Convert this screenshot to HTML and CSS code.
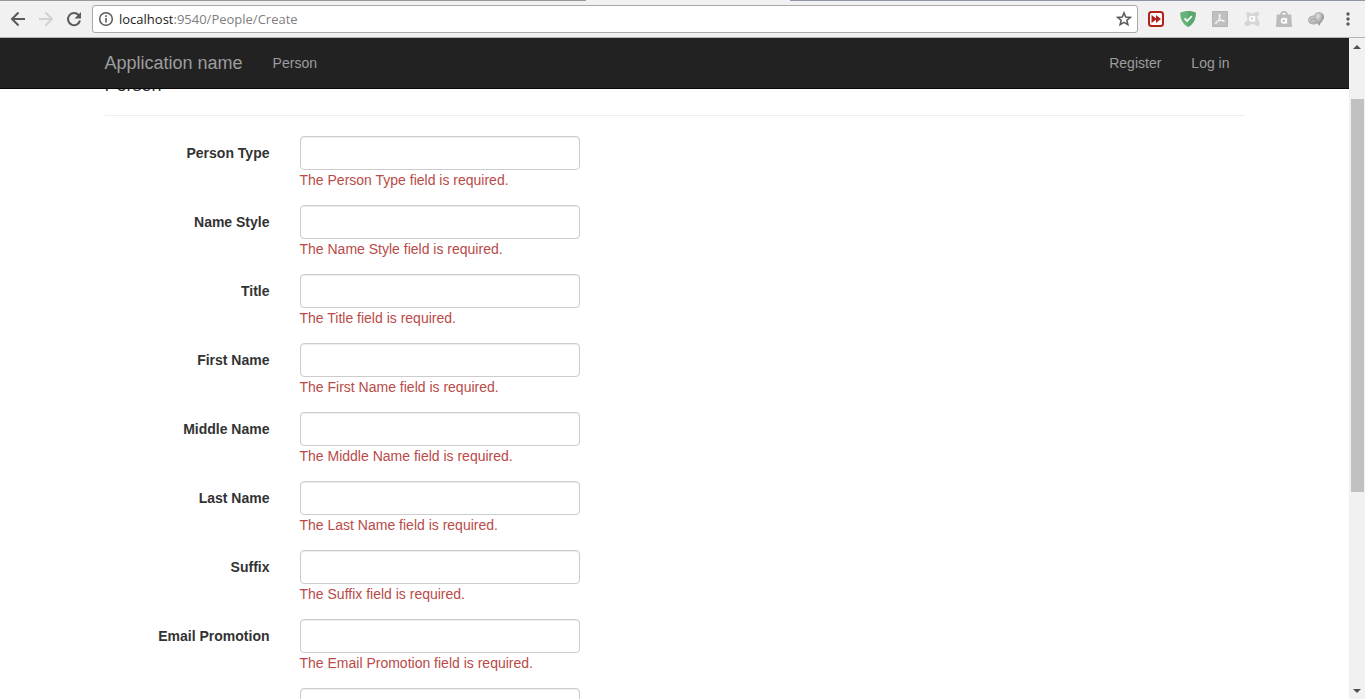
FILE: index.html
```html
<!DOCTYPE html>
<html lang="en">
<head>
  <meta charset="UTF-8">
  <meta name="viewport" content="width=device-width, initial-scale=1.0">
  <title>Create - My ASP.NET Application</title>
  <link rel="stylesheet" href="styles.css">
</head>
<body>

  <!-- browser toolbar -->
  <div class="toolbar">
    <button type="button" class="tool" aria-label="Back">
      <svg width="16" height="16" viewBox="0 0 16 16" fill="none" stroke="#5a5a5a" stroke-width="2"><path d="M15 8H2.5M8.5 1.5L2 8l6.5 6.5"/></svg>
    </button>
    <button type="button" class="tool" aria-label="Forward">
      <svg width="16" height="16" viewBox="0 0 16 16" fill="none" stroke="#d2d2d2" stroke-width="2"><path d="M1 8h12.5M7.5 1.5L14 8l-6.5 6.5"/></svg>
    </button>
    <button type="button" class="tool" aria-label="Reload">
      <svg width="16" height="16" viewBox="0 0 16 16"><path d="M12.6 4A6.1 6.1 0 1 0 14 9.6" fill="none" stroke="#5a5a5a" stroke-width="2"/><path d="M15 1v6.5H8.5z" fill="#5a5a5a"/></svg>
    </button>

    <div class="address-bar">
      <svg width="16" height="16" viewBox="0 0 16 16"><circle cx="8" cy="8" r="6.3" fill="none" stroke="#5a5a5a" stroke-width="1.5"/><path d="M7.2 7h1.6v4.5H7.2zM7.2 4.3h1.6v1.6H7.2z" fill="#5a5a5a"/></svg>
      <label class="host" for="address">localhost</label>
      <input type="text" class="address" id="address" value=":9540/People/Create">
      <button type="button" class="star" aria-label="Bookmark this page">
        <svg width="16" height="16" viewBox="0 0 16 16" fill="none" stroke="#5a5a5a" stroke-width="1.5"><path d="M8 1.9l1.7 4.2 4.6.3-3.5 2.9 1.1 4.4L8 11.3l-3.9 2.4 1.1-4.4L1.7 6.4l4.6-.3z"/></svg>
      </button>
    </div>

    <div class="extensions">
      <button type="button" class="tool" aria-label="Fast forward">
        <svg width="16" height="16" viewBox="0 0 16 16"><rect x="1" y="1" width="14" height="14" rx="2.5" fill="#fff" stroke="#b5201b" stroke-width="2"/><path d="M3.5 4L8 7.3V4l5 4-5 4V8.7L3.5 12z" fill="#b5201b"/></svg>
      </button>
      <button type="button" class="tool" aria-label="Ad blocker">
        <svg width="16" height="16" viewBox="0 0 16 16"><path d="M8 0c2.5 0 5 .6 7.7 1.5C15.8 8 14 12.5 8 16 2 12.5.2 8 .3 1.5 3 .6 5.5 0 8 0z" fill="#67b279"/><path d="M8 0c2.5 0 5 .6 7.7 1.5C15.8 8 14 12.5 8 16z" fill="#5aa86d"/><path d="M4.5 7.3l2.7 2.8 4.6-5" fill="none" stroke="#fff" stroke-width="1.7"/></svg>
      </button>
      <button type="button" class="tool" aria-label="PDF">
        <svg width="16" height="16" viewBox="0 0 16 16"><path d="M.5.5h15v15H.5z" fill="#c0c0c0" stroke="#b4b4b4"/><path d="M7.8 3c.7 1.2-.1 3.800-1.300 6.200-1 2-2.300 3.600-3 3.300-.6-.5 1.200-2.200 3.600-2.800 2.200-.6 5.400-.6 5.400.3-.1.900-2.700.1-4.100-1.700C7.300 6.900 6.900 3.500 7.800 3z" fill="none" stroke="#fff"/></svg>
      </button>
      <button type="button" class="tool" aria-label="Online security">
        <svg width="16" height="16" viewBox="0 0 16 16"><path d="M3 1.500C4.500.2 6 2.500 8 2.500S11.500.300 13.500.700c2 .4 2.300 2.600 1 3.800-1.500 1.500-1.300 2.800 0 4.500 1.500 2 1.500 4.500.3 5.800-1.400 1.200-3-.8-4.800-1.600-2-.8-3.600.8-5.500 1.600C2 15.700-.2 14.300.3 12.300.700 10.500 3 10.300 3.300 8.500 3.600 6.500 1.300 3.500 3 1.500z" fill="#d6d6d6"/><circle cx="8" cy="7.700" r="2.200" fill="none" stroke="#fff" stroke-width="1.600"/><path d="M10.500 5v5.500" stroke="#fff" stroke-width="1.500"/></svg>
      </button>
      <button type="button" class="tool" aria-label="Shopping">
        <svg width="16" height="16" viewBox="0 0 16 16"><path d="M4.8 4.5C4.8-.5 11.2-.5 11.2 4.5" fill="none" stroke="#b5b5b5" stroke-width="1.5"/><path d="M.8 3.5h14.4L16 16H0z" fill="#bcbcbc"/><circle cx="7.7" cy="9.8" r="2.1" fill="none" stroke="#fff" stroke-width="1.7"/><path d="M10.3 7v5.7" stroke="#fff" stroke-width="1.7"/></svg>
      </button>
      <button type="button" class="tool" aria-label="Download manager">
        <svg width="16" height="16" viewBox="0 0 16 16">
          <defs>
            <radialGradient id="globe" cx=".4" cy=".3" r=".8"><stop offset="0" stop-color="#e2e2e2"/><stop offset="1" stop-color="#757575"/></radialGradient>
          </defs>
          <ellipse cx="5.500" cy="9" rx="5.500" ry="4.500" fill="#b0b0b0"/>
          <path d="M1.500 9.500C3 6.500 5 6 7 6.500M3 11.500c1-1.500 2-2 3.500-2" fill="none" stroke="#ddd"/>
          <path d="M10.500 1C14 1 16 3.500 16 6c0 3-3 5-5 9-1-4-5-5.500-5-9C6 3.500 7.500 1 10.500 1z" fill="url(#globe)"/>
        </svg>
      </button>
      <button type="button" class="tool" aria-label="Menu">
        <svg width="16" height="16" viewBox="0 0 16 16" fill="#5a5a5a"><circle cx="8" cy="3" r="1.7"/><circle cx="8" cy="8" r="1.7"/><circle cx="8" cy="13" r="1.7"/></svg>
      </button>
    </div>
  </div>

  <div class="window">
    <div class="page">
      <nav class="navbar">
        <div class="container navbar-inner">
          <a href="#" class="navbar-brand">Application name</a>
          <a href="#" class="nav-link">Person</a>
          <div class="navbar-right">
            <a href="#" class="nav-link">Register</a>
            <a href="#" class="nav-link">Log in</a>
          </div>
        </div>
      </nav>

      <div class="scroll-area">
        <form class="container body-content">
          <h4>Person</h4>
          <hr>

          <div class="form-group">
            <label for="PersonType">Person Type</label>
            <div class="field">
              <input type="text" class="form-control" id="PersonType">
              <span class="text-danger">The Person Type field is required.</span>
            </div>
          </div>

          <div class="form-group">
            <label for="NameStyle">Name Style</label>
            <div class="field">
              <input type="text" class="form-control" id="NameStyle">
              <span class="text-danger">The Name Style field is required.</span>
            </div>
          </div>

          <div class="form-group">
            <label for="Title">Title</label>
            <div class="field">
              <input type="text" class="form-control" id="Title">
              <span class="text-danger">The Title field is required.</span>
            </div>
          </div>

          <div class="form-group">
            <label for="FirstName">First Name</label>
            <div class="field">
              <input type="text" class="form-control" id="FirstName">
              <span class="text-danger">The First Name field is required.</span>
            </div>
          </div>

          <div class="form-group">
            <label for="MiddleName">Middle Name</label>
            <div class="field">
              <input type="text" class="form-control" id="MiddleName">
              <span class="text-danger">The Middle Name field is required.</span>
            </div>
          </div>

          <div class="form-group">
            <label for="LastName">Last Name</label>
            <div class="field">
              <input type="text" class="form-control" id="LastName">
              <span class="text-danger">The Last Name field is required.</span>
            </div>
          </div>

          <div class="form-group">
            <label for="Suffix">Suffix</label>
            <div class="field">
              <input type="text" class="form-control" id="Suffix">
              <span class="text-danger">The Suffix field is required.</span>
            </div>
          </div>

          <div class="form-group">
            <label for="EmailPromotion">Email Promotion</label>
            <div class="field">
              <input type="text" class="form-control" id="EmailPromotion">
              <span class="text-danger">The Email Promotion field is required.</span>
            </div>
          </div>

          <div class="form-group">
            <div class="field">
              <input type="text" class="form-control" aria-label="Next field">
            </div>
          </div>
        </form>
      </div>
    </div>

    <!-- scrollbar -->
    <div class="scrollbar">
      <svg class="arrow" width="16" height="17" viewBox="0 0 16 17"><path d="M8 7l4 4H4z" fill="#505050"/></svg>
      <div class="track-above"></div>
      <div class="thumb"></div>
      <div class="track-below"></div>
      <svg class="arrow" width="16" height="17" viewBox="0 0 16 17"><path d="M4 7h8l-4 4z" fill="#505050"/></svg>
    </div>
  </div>

</body>
</html>
```
FILE: styles.css
```css
* {
    box-sizing: border-box;
}

body {
    display: flex;
    flex-direction: column;
    height: 100vh;
    margin: 0;
    overflow: hidden;
    font-family: "Liberation Sans", Arial, sans-serif;
    font-size: 14px;
    line-height: 20px;
    color: #333;
    background-color: #fff;
}

button {
    padding: 0;
    border: 0;
    background: none;
}

svg {
    display: block;
}

/* browser toolbar */
.toolbar {
    display: flex;
    flex: none;
    align-items: center;
    gap: 12px;
    height: 38px;
    padding: 1px 9px 0 10px;
    background-color: #f1f1f1;
    background-image: linear-gradient(to right, #999 0 586px, #f1f1f1 586px 790px, #8f96a8 790px);
    background-repeat: no-repeat;
    background-size: 100% 1px;
    border-bottom: 1px solid #b4b4b4;
}

.address-bar {
    display: flex;
    flex: 1;
    align-items: center;
    height: 28px;
    margin-left: -2px;
    padding: 0 5px;
    background-color: #fff;
    border: 1px solid #a9a9a9;
    border-radius: 3px;
}

.host,
.address {
    font-family: "Open Sans", "Noto Sans", sans-serif;
    font-size: 13px;
    line-height: 20px;
}

.host {
    margin-left: 5px;
    color: #222;
}

.address {
    flex: 1;
    min-width: 0;
    padding: 0;
    border: 0;
    outline: 0;
    color: #808080;
}

.extensions {
    display: flex;
    gap: 16px;
    margin-left: -2px;
}

/* page and scrollbar */
.window {
    display: flex;
    flex: 1;
    min-height: 0;
}

.page {
    display: flex;
    flex: 1;
    flex-direction: column;
    min-width: 0;
}

.container {
    width: 100%;
    max-width: 1170px;
    margin: 0 auto;
    padding: 0 15px;
}

.navbar {
    flex: none;
    background-color: #222;
    border-bottom: 1px solid #080808;
}

.navbar-inner {
    display: flex;
    align-items: center;
    height: 50px;
}

.navbar a {
    color: #9d9d9d;
    text-decoration: none;
}

.navbar-brand {
    margin-right: 15px;
    font-size: 18px;
}

.nav-link {
    padding: 15px;
}

.navbar-right {
    display: flex;
    margin-left: auto;
}

.scroll-area {
    flex: 1;
    min-height: 0;
    overflow: hidden;
}

/* the page is scrolled, so the heading is partly under the navbar */
.body-content {
    margin-top: -14px;
}

h4 {
    margin: 0;
    font-size: 18px;
    font-weight: 500;
    line-height: 20px;
}

hr {
    margin: 20px 0;
    border: 0;
    border-top: 1px solid #eee;
}

.form-group {
    display: flex;
    margin-bottom: 15px;
}

.form-group label {
    width: 165px;
    padding-top: 7px;
    font-weight: bold;
    text-align: right;
}

.field {
    display: flex;
    flex-direction: column;
    width: 280px;
    margin-left: 30px;
}

.form-group .field:first-child {
    margin-left: 195px;
}

.form-control {
    width: 100%;
    height: 34px;
    padding: 6px 12px;
    font-size: 14px;
    border: 1px solid #ccc;
    border-radius: 4px;
    box-shadow: inset 0 1px 1px rgba(0, 0, 0, 0.075);
}

.text-danger {
    color: #b94a48;
}

.scrollbar {
    display: flex;
    flex: none;
    flex-direction: column;
    width: 16px;
    background-color: #f1f1f1;
}

.arrow {
    flex: none;
}

.track-above {
    flex: 44;
}

.thumb {
    flex: 393;
    margin: 0 1px 0 2px;
    background-color: #c1c1c1;
}

.track-below {
    flex: 190;
}
```
